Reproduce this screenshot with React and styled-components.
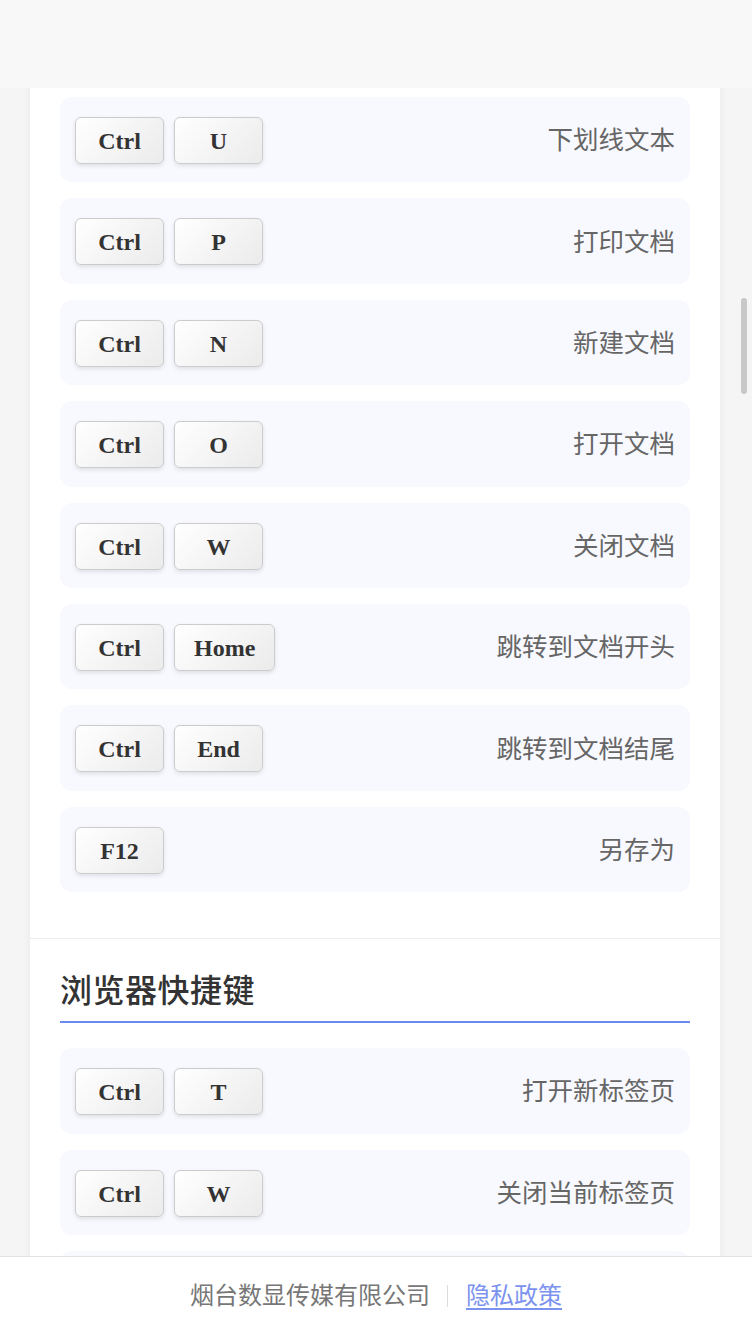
import React from "react"
import styled, { createGlobalStyle } from "styled-components"

const docKeys = [
  { keys: ["Ctrl", "U"], label: "下划线文本" },
  { keys: ["Ctrl", "P"], label: "打印文档" },
  { keys: ["Ctrl", "N"], label: "新建文档" },
  { keys: ["Ctrl", "O"], label: "打开文档" },
  { keys: ["Ctrl", "W"], label: "关闭文档" },
  { keys: ["Ctrl", "Home"], label: "跳转到文档开头" },
  { keys: ["Ctrl", "End"], label: "跳转到文档结尾" },
  { keys: ["F12"], label: "另存为" },
]

// the last row sits under the fixed footer, only its top edge shows
const browserKeys = [
  { keys: ["Ctrl", "T"], label: "打开新标签页" },
  { keys: ["Ctrl", "W"], label: "关闭当前标签页" },
  { keys: [], label: "" },
]

export default function App() {
  return (
    <>
      <GlobalStyle />
      <Header />
      <Card>
        <Section>
          <List>
            {docKeys.map((s, i) => (
              <Shortcut key={i} {...s} />
            ))}
          </List>
        </Section>
        <Section $divided>
          <Heading>浏览器快捷键</Heading>
          <List>
            {browserKeys.map((s, i) => (
              <Shortcut key={i} {...s} />
            ))}
          </List>
        </Section>
      </Card>
      <ScrollThumb />
      <Footer>
        <Company>烟台数显传媒有限公司</Company>
        <Sep />
        <FooterLink href="#">隐私政策</FooterLink>
      </Footer>
    </>
  )
}

function Shortcut({ keys, label }) {
  return (
    <Row>
      <Keys>
        {keys.map((k) => (
          <Key key={k}>{k}</Key>
        ))}
      </Keys>
      <Desc>{label}</Desc>
    </Row>
  )
}

const GlobalStyle = createGlobalStyle`
  html, body {
    margin: 0;
    padding: 0;
    background: #f5f5f5;
    overflow: hidden;
    height: 1336px;
  }
  * { box-sizing: border-box; }
`

const Header = styled.div`
  position: fixed;
  top: 0;
  left: 0;
  right: 0;
  height: 88px;
  background: #f8f8f8;
  z-index: 5;
`

const Card = styled.main`
  width: 690px;
  margin: 0 0 0 30px;
  padding-top: 97px;
  background: #fff;
  box-shadow: 0 0 10px rgba(0, 0, 0, 0.05);
  min-height: 1500px;
`

const Section = styled.section`
  padding: ${(p) => (p.$divided ? "30px 30px 40px" : "0 30px 46px")};
  border-top: ${(p) => (p.$divided ? "1px solid #eeeeee" : "none")};
`

const Heading = styled.h2`
  margin: 0 0 25px;
  padding-bottom: 14px;
  border-bottom: 2px solid #6b8af0;
  font-family: "Noto Sans CJK SC", "Liberation Serif", serif;
  font-size: 32px;
  font-weight: 500;
  line-height: 38px;
  letter-spacing: 0.5px;
  color: #333;
`

const List = styled.div`
  display: flex;
  flex-direction: column;
  gap: 16px;
`

const Row = styled.div`
  display: flex;
  align-items: center;
  justify-content: space-between;
  min-height: 85.4px;
  padding: 20px 15px 18.4px;
  background: #f8f9fe;
  border-radius: 12px;
`

const Keys = styled.div`
  display: flex;
  gap: 10px;
`

const Key = styled.kbd`
  display: inline-flex;
  align-items: center;
  justify-content: center;
  min-width: 89px;
  height: 47px;
  padding: 1px 19px 0;
  border: 1px solid #cccccc;
  border-radius: 6px;
  background: linear-gradient(135deg, #ffffff 0%, #ebebeb 100%);
  box-shadow: 0 2px 4px rgba(0, 0, 0, 0.1);
  font-family: "Liberation Serif", serif;
  font-size: 24px;
  font-weight: 700;
  line-height: 1;
  color: #333;
`

const Desc = styled.span`
  padding-bottom: 4px;
  font-family: "Noto Sans CJK SC", sans-serif;
  font-size: 25.5px;
  line-height: 1.2;
  color: #666;
`

const ScrollThumb = styled.div`
  position: fixed;
  left: 741px;
  top: 298px;
  width: 6px;
  height: 96px;
  border-radius: 3px;
  background: #c8c8c8;
  z-index: 4;
`

const Footer = styled.footer`
  position: fixed;
  left: 0;
  right: 0;
  bottom: 0;
  height: 80px;
  padding-bottom: 4px;
  display: flex;
  align-items: center;
  justify-content: center;
  background: #fff;
  border-top: 1px solid #e2e2e2;
  font-family: "Noto Sans CJK SC", sans-serif;
  font-size: 24px;
  line-height: 1.2;
  z-index: 6;
`

const Company = styled.span`
  color: #777;
`

const Sep = styled.span`
  width: 1px;
  height: 22px;
  margin: 3px 18px 0 17px;
  background: #dcdcdc;
`

const FooterLink = styled.a`
  color: #7b93ef;
  text-decoration: underline;
  text-underline-offset: 4px;
`
